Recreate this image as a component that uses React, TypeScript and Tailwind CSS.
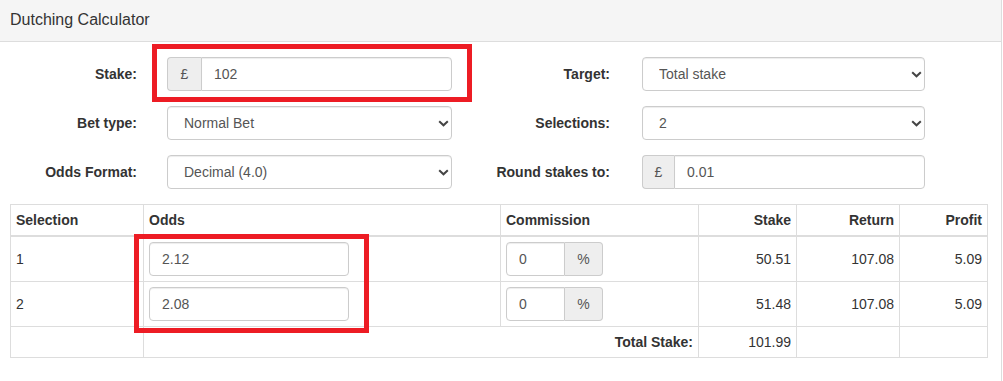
import React from "react";

const inputBase =
  "h-[34px] border border-[#ccc] bg-white text-[14px] text-[#555] shadow-[inset_0_1px_1px_rgba(0,0,0,0.075)] outline-none";

function Chevron() {
  return (
    <svg
      className="pointer-events-none absolute right-[3px] top-[14px]"
      width="11"
      height="7"
      viewBox="0 0 11 7"
      fill="none"
    >
      <path d="M1.2 1.2L5.5 5.3L9.8 1.2" stroke="#444" strokeWidth="2" />
    </svg>
  );
}

function Select({ value, width }: { value: string; width: string }) {
  return (
    <div className={`relative ${width}`}>
      <select
        defaultValue={value}
        className={`${inputBase} w-full appearance-none rounded-[4px] pl-[16px] pr-[20px] font-['Liberation_Sans',Arial,sans-serif]`}
      >
        <option>{value}</option>
      </select>
      <Chevron />
    </div>
  );
}

function PoundGroup({ value, width, addon }: { value: string; width: string; addon: string }) {
  return (
    <div className={`flex ${width}`}>
      <span
        className={`flex h-[34px] ${addon} items-center justify-center rounded-l-[4px] border border-r-0 border-[#ccc] bg-[#eee] text-[14px] text-[#555]`}
      >
        £
      </span>
      <input
        defaultValue={value}
        className={`${inputBase} min-w-0 flex-1 rounded-r-[4px] px-[12px] font-['Liberation_Sans',Arial,sans-serif]`}
      />
    </div>
  );
}

function Label({ text, width }: { text: string; width: string }) {
  return (
    <label className={`${width} shrink-0 text-right text-[14px] font-bold leading-[20px] text-[#333]`}>
      {text}
    </label>
  );
}

const rows = [
  { sel: "1", odds: "2.12", stake: "50.51", ret: "107.08", profit: "5.09" },
  { sel: "2", odds: "2.08", stake: "51.48", ret: "107.08", profit: "5.09" },
];

const cell = "border border-[#ddd] px-[5px] leading-[20px]";

export default function App() {
  return (
    <div className="relative h-[381px] w-[1003px] overflow-hidden bg-white font-['Liberation_Sans',Arial,sans-serif] text-[14px] text-[#333]">
      <div className="w-[1002px] border-r border-[#ddd] bg-white">
        <div className="flex h-[42px] items-center border-b border-[#ddd] bg-[#f5f5f5] pl-[10px] pb-[1px] text-[16px] text-[#333]">
          Dutching Calculator
        </div>
        <div className="pl-[10px] pr-[15px] pt-[15px] pb-[24px]">
          <div className="flex flex-col gap-[15px]">
            <div className="flex items-center">
              <Label text="Stake:" width="w-[127px]" />
              <PoundGroup value="102" width="ml-[30px] w-[285px]" addon="w-[34px]" />
              <Label text="Target:" width="w-[158px]" />
              <div className="ml-[32px]">
                <Select value="Total stake" width="w-[283px]" />
              </div>
            </div>
            <div className="flex items-center">
              <Label text="Bet type:" width="w-[127px]" />
              <div className="ml-[30px]">
                <Select value="Normal Bet" width="w-[285px]" />
              </div>
              <Label text="Selections:" width="w-[158px]" />
              <div className="ml-[32px]">
                <Select value="2" width="w-[283px]" />
              </div>
            </div>
            <div className="flex items-center">
              <Label text="Odds Format:" width="w-[127px]" />
              <div className="ml-[30px]">
                <Select value="Decimal (4.0)" width="w-[285px]" />
              </div>
              <Label text="Round stakes to:" width="w-[158px]" />
              <PoundGroup value="0.01" width="ml-[32px] w-[283px]" addon="w-[32px]" />
            </div>
          </div>

          <table className="mt-[15px] w-[977px] table-fixed border-collapse">
            <colgroup>
              <col className="w-[133px]" />
              <col className="w-[357px]" />
              <col className="w-[198px]" />
              <col className="w-[98px]" />
              <col className="w-[103px]" />
              <col className="w-[88px]" />
            </colgroup>
            <thead>
              <tr className="font-bold">
                <th className={`${cell} border-b-2 py-[5px] text-left`}>Selection</th>
                <th className={`${cell} border-b-2 py-[5px] text-left`}>Odds</th>
                <th className={`${cell} border-b-2 py-[5px] text-left`}>Commission</th>
                <th className={`${cell} border-b-2 py-[5px] text-right`}>Stake</th>
                <th className={`${cell} border-b-2 py-[5px] text-right`}>Return</th>
                <th className={`${cell} border-b-2 py-[5px] text-right`}>Profit</th>
              </tr>
            </thead>
            <tbody>
              {rows.map((r) => (
                <tr key={r.sel} className="h-[44px]">
                  <td className={`${cell} py-[5px]`}>{r.sel}</td>
                  <td className={`${cell} py-[5px]`}>
                    <input
                      defaultValue={r.odds}
                      className={`${inputBase} block w-[200px] rounded-[4px] px-[12px] font-['Liberation_Sans',Arial,sans-serif]`}
                    />
                  </td>
                  <td className={`${cell} py-[5px]`}>
                    <div className="flex w-[97px]">
                      <input
                        defaultValue="0"
                        className={`${inputBase} w-[59px] rounded-l-[4px] px-[12px] font-['Liberation_Sans',Arial,sans-serif]`}
                      />
                      <span className="flex h-[34px] w-[38px] items-center justify-center rounded-r-[4px] border border-l-0 border-[#ccc] bg-[#eee] text-[14px] text-[#555]">
                        %
                      </span>
                    </div>
                  </td>
                  <td className={`${cell} py-[5px] text-right`}>{r.stake}</td>
                  <td className={`${cell} py-[5px] text-right`}>{r.ret}</td>
                  <td className={`${cell} py-[5px] text-right`}>{r.profit}</td>
                </tr>
              ))}
              <tr className="h-[31px]">
                <td className={`${cell} py-[5px]`}></td>
                <td colSpan={2} className={`${cell} py-[5px] text-right font-bold`}>
                  Total Stake:
                </td>
                <td className={`${cell} py-[5px] text-right`}>101.99</td>
                <td className={`${cell} py-[5px]`}></td>
                <td className={`${cell} py-[5px]`}></td>
              </tr>
            </tbody>
          </table>
        </div>
      </div>

      <div className="pointer-events-none absolute left-[152px] top-[44px] h-[58px] w-[320px] border-[5px] border-[#ed1c24]" />
      <div className="pointer-events-none absolute left-[134px] top-[234px] h-[99px] w-[235px] border-[5px] border-[#ed1c24]" />
    </div>
  );
}
